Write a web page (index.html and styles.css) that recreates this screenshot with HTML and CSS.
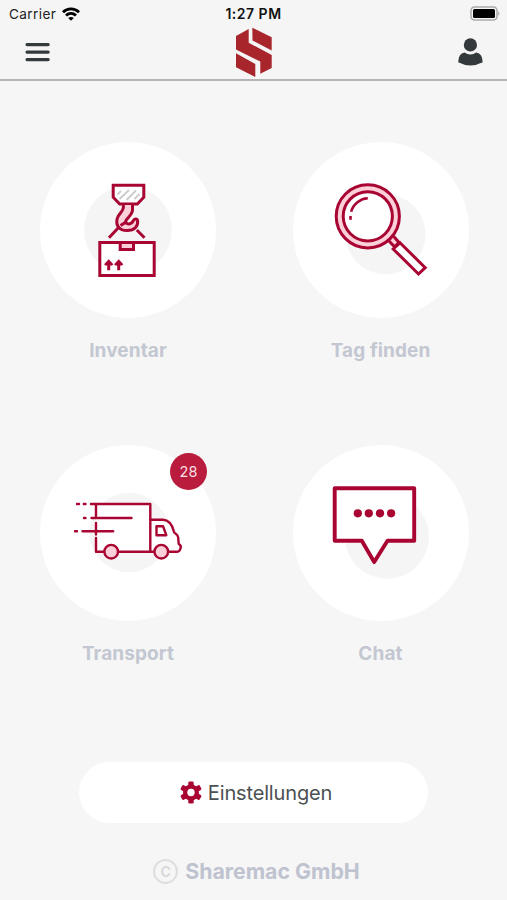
FILE: index.html
```html
<!DOCTYPE html>
<html lang="de">
<head>
    <meta charset="UTF-8">
    <meta name="viewport" content="width=device-width, initial-scale=1.0">
    <title>Sharemac</title>
    <link rel="stylesheet" href="styles.css">
</head>
<body>
    <header class="header">
        <div class="status-bar">
            <div class="carrier">
                <span>Carrier</span>
                <svg width="18" height="14" viewBox="0 0 18 14" fill="none" stroke="#000" stroke-width="2.8">
                    <path d="M1 5.2C5.5 .8 12.5 .8 17 5.2"/>
                    <path d="M4 8.6C6.9 5.8 11.1 5.8 14 8.6"/>
                    <path d="M9 13.8L6.2 11Q9 8.8 11.8 11Z" fill="#000" stroke="none"/>
                </svg>
            </div>
            <div class="time">1:27 PM</div>
            <svg class="battery" width="31" height="15" viewBox="0 0 31 15">
                <rect x="1" y="1" width="26" height="13" rx="3.5" fill="#f5f5f5" stroke="#aaa" stroke-width="1.5"/>
                <rect x="3" y="3" width="22" height="9" rx="1.5" fill="#000"/>
                <path d="M28.2 5.2Q30.8 7.5 28.2 9.8Z" fill="#aaa"/>
            </svg>
        </div>
        <nav class="nav-bar">
            <svg class="menu" width="25" height="19" viewBox="0 0 25 19" fill="none" stroke="#34393c" stroke-width="3.1" stroke-linecap="round">
                <path d="M2 1.6h21.2M2 9.1h21.2M2 16.6h21.2"/>
            </svg>
            <svg class="logo" width="36" height="51" viewBox="0 0 36 51" fill="#a8262b">
                <path d="M16.3 .7L35.7 10.3V23.5L16.5 13.5Z"/>
                <path d="M12.7 2V15.8L35.7 28V41L24.3 46.7V34.5L0 22.5V9Z"/>
                <path d="M0 26.3L19.3 37V50L0 40.3Z"/>
            </svg>
            <svg class="user" width="25" height="28" viewBox="0 0 25 28" fill="#34393c">
                <circle cx="12.4" cy="6.9" r="6.6"/>
                <path d="M6.5 14.4Q12.4 18.6 18.3 14.4Q24.6 15.6 24.7 24.2Q18.5 27.4 12.4 27.4Q6.3 27.4 .2 24.2Q.3 15.6 6.5 14.4Z"/>
            </svg>
        </nav>
    </header>

    <main class="tiles">
        <div class="tile">
            <div class="circle">
                <svg viewBox="0 0 176 176" class="icon">
                    <circle class="shade" cx="88" cy="88" r="44"/>
                    <path class="white" d="M73.2 43.2H103.8V55.2L97.3 62H79.7L73.2 55.2Z"/>
                    <path class="hatch" d="M77.5 52.5L81 49M79.5 57L89 48M86.5 58L96 48.5M94.5 57L99.5 52"/>
                    <path class="pink" d="M83.2 63C85 69 78.5 71 77.2 76.5C75.5 83.5 79 88.4 87 88.6C94.5 88.6 98.3 84.5 97.6 78.5C97.2 76 94 76.6 93 79.2C91.5 82.6 86.2 82.8 85.6 79.8C85.3 77 92.3 73.5 92.5 68V63"/>
                    <path d="M79.5 84.5L69 95.7M96.8 88L104.5 95.7M80.5 83.5L87 79.5"/>
                    <path class="white" d="M59.8 100.5H114.2V133.5H59.8Z"/>
                    <path class="pink" d="M80.2 100.5H93.5V107.6H80.2Z"/>
                    <path class="solid" d="M68.7 117.3L73.3 122.2L72 123.5H70.2V128.3H67.2V123.5H65.4L64.1 122.2ZM78.7 117.3L83.3 122.2L82 123.5H80.2V128.3H77.2V123.5H75.4L74.1 122.2Z"/>
                </svg>
            </div>
            <div class="label">Inventar</div>
        </div>

        <div class="tile">
            <div class="circle">
                <svg viewBox="0 0 176 176" class="icon">
                    <circle class="shade" cx="92.5" cy="92.3" r="40"/>
                    <path class="pink" d="M96 99L101.5 104.8L106 100.5L100.8 94.5"/>
                    <circle class="pink" cx="74.8" cy="74.3" r="31.6"/>
                    <circle class="white" cx="74.8" cy="74.3" r="24.6"/>
                    <path class="shine" d="M74.8 56.3C67.5 56.5 60 62 58.2 69.7M57.5 74V77.7"/>
                    <path class="white" d="M107 100.8L132.2 125.7L125.5 132L100.2 107Z"/>
                </svg>
            </div>
            <div class="label">Tag finden</div>
        </div>

        <div class="tile">
            <div class="circle">
                <svg viewBox="0 0 176 176" class="icon truck">
                    <circle class="shade" cx="89" cy="87.5" r="39.7"/>
                    <path class="fill-white" d="M56 59H110.3V74.7H123C130 75 132.5 81 134 87L138 91.5L140 101L138 106.7H56Z"/>
                    <path d="M51 59H110.3V106.7M56 59V71M56 78V89.5M56 93V106.7H64M78.5 106.7H114M37 59H39M43.8 59H45.5"/>
                    <path d="M44 73H45.5M51.5 73H91.5M35 86.3H37M42.5 86.3H73.2"/>
                    <path d="M110.3 74.7H123C129.5 75 132.5 80.5 134 86.8C134.5 88.5 138 89.5 138.2 92.5L138.7 99C141 100 141 102 140.5 103.5Q139.6 106.7 137.5 106.7H128.5"/>
                    <path d="M116.5 81.2H123L126.3 90.2H116.5Z"/>
                    <circle class="pink" cx="71.2" cy="106.7" r="6.8"/>
                    <circle class="pink" cx="121.3" cy="106.7" r="6.8"/>
                </svg>
                <span class="badge">28</span>
            </div>
            <div class="label">Transport</div>
        </div>

        <div class="tile">
            <div class="circle">
                <svg viewBox="0 0 176 176" class="icon chat">
                    <circle class="shade" cx="94" cy="91.7" r="42"/>
                    <path class="white" d="M41.7 43.2H121.2V95.8H94.5L81.2 117L68.8 95.8H41.7Z"/>
                    <g class="solid">
                        <circle cx="64.8" cy="68.3" r="4.1"/>
                        <circle cx="75.8" cy="68.3" r="4.1"/>
                        <circle cx="87" cy="68.3" r="4.1"/>
                        <circle cx="98.1" cy="68.3" r="4.1"/>
                    </g>
                </svg>
            </div>
            <div class="label">Chat</div>
        </div>
    </main>

    <footer class="footer">
        <button class="settings-btn">
            <svg width="22" height="23" viewBox="-11 -11.5 22 23">
                <g fill="#a90532">
                    <rect x="-2.7" y="-11" width="5.4" height="22" rx="1.3"/>
                    <rect x="-2.7" y="-11" width="5.4" height="22" rx="1.3" transform="rotate(60)"/>
                    <rect x="-2.7" y="-11" width="5.4" height="22" rx="1.3" transform="rotate(120)"/>
                    <circle r="8"/>
                </g>
                <circle r="3.7" fill="#fff"/>
            </svg>
            <span>Einstellungen</span>
        </button>
        <div class="copyright">
            <span class="copy-icon">C</span>
            <span>Sharemac GmbH</span>
        </div>
    </footer>
</body>
</html>
```
FILE: styles.css
```css
* {
    box-sizing: border-box;
}

body {
    margin: 0;
    height: 900px;
    display: flex;
    flex-direction: column;
    background-color: #f6f6f6;
    font-family: Inter, "Liberation Sans", sans-serif;
    overflow: hidden;
}

svg {
    display: block;
    flex: none;
}

/* header */
.header {
    height: 81px;
    background-color: #f5f5f5;
    border-bottom: 2px solid #b4b4b4;
}

.status-bar {
    height: 26px;
    padding: 1px 6px 0 9px;
    display: grid;
    grid-template-columns: 1fr auto 1fr;
    align-items: center;
    color: #222;
}

.carrier {
    display: flex;
    align-items: center;
    gap: 6px;
    font-size: 13.6px;
    letter-spacing: 0.4px;
}

.time {
    margin-right: 3px;
    font-size: 14px;
    font-weight: 600;
    letter-spacing: 0.5px;
    color: #111;
}

.battery {
    justify-self: end;
}

.nav-bar {
    height: 52px;
    padding: 0 24px 0 25px;
    display: grid;
    grid-template-columns: 1fr auto 1fr;
    align-items: center;
}

.user {
    justify-self: end;
}

/* tiles */
.tiles {
    height: 681px;
    padding: 61px 0 0 40px;
    display: grid;
    grid-template-columns: 176px 176px;
    grid-template-rows: 303px 303px;
    column-gap: 76.5px;
}

.circle {
    position: relative;
    width: 176px;
    height: 176px;
    border-radius: 50%;
    background-color: #fff;
}

.icon {
    width: 176px;
    height: 176px;
    fill: none;
    stroke: #a90532;
    stroke-width: 3;
}

.icon .shade {
    fill: #f5f5f5;
    stroke: none;
}

.icon .white {
    fill: #fff;
}

.icon .fill-white {
    fill: #fff;
    stroke: none;
}

.icon .pink {
    fill: #fbd0d8;
}

.icon .solid {
    fill: #a90532;
    stroke: none;
}

.icon .hatch {
    stroke: #ccc;
    stroke-width: 2;
}

.icon .shine {
    stroke-width: 2.6;
}

.truck {
    stroke-width: 2.4;
    stroke-linecap: round;
    stroke-linejoin: round;
}

.chat {
    stroke-width: 3.9;
    stroke-linejoin: round;
}

.badge {
    position: absolute;
    top: 8px;
    left: 130px;
    width: 37px;
    height: 37px;
    border-radius: 50%;
    background-color: #b91c3c;
    color: #f8dfe4;
    font-size: 14.5px;
    line-height: 37px;
    text-align: center;
}

.label {
    margin-top: 21px;
    font-size: 19px;
    font-weight: 700;
    line-height: 24px;
    letter-spacing: 0.1px;
    text-align: center;
    white-space: nowrap;
    color: #c3c7d1;
}

/* footer */
.footer {
    display: flex;
    flex-direction: column;
    align-items: center;
}

.settings-btn {
    width: 349px;
    height: 61px;
    padding: 0 0 0 5px;
    border: none;
    border-radius: 31px;
    background-color: #fff;
    display: flex;
    align-items: center;
    justify-content: center;
    gap: 6px;
    font-family: inherit;
    font-size: 20px;
    letter-spacing: -0.15px;
    color: #4b5052;
}

.copyright {
    margin-top: 34px;
    padding-left: 6px;
    display: flex;
    align-items: center;
    gap: 7px;
    font-size: 21.3px;
    font-weight: 700;
    line-height: 28px;
    color: #bfc3d0;
}

.copy-icon {
    width: 25px;
    height: 25px;
    border: 2px solid #dedede;
    border-radius: 50%;
    font-size: 14px;
    line-height: 21px;
    text-align: center;
    color: #dadada;
}
```
